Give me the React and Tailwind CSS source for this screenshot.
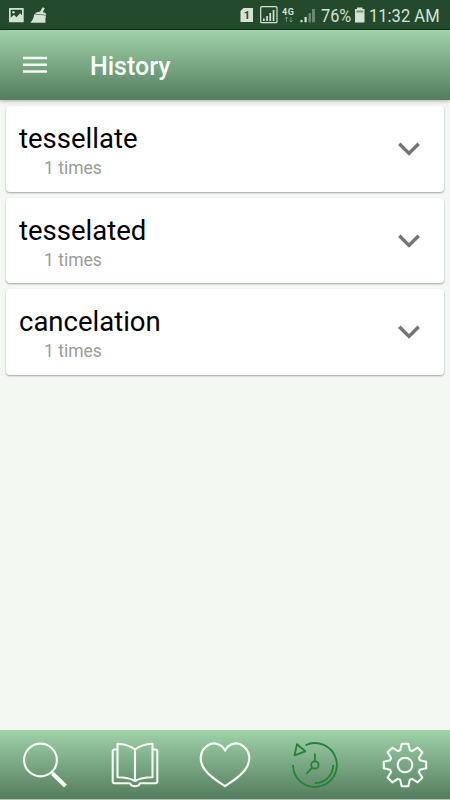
import React from "react";

const entries = [
  { word: "tessellate", count: "1 times" },
  { word: "tesselated", count: "1 times" },
  { word: "cancelation", count: "1 times" },
];

// Outline of an eight-toothed gear centred on (45, 35)
const gearPoints = Array.from({ length: 8 }, (_, i) => {
  const a = (i * Math.PI) / 4;
  return [[-4.8, -14.8], [-3.3, -21.2], [3.3, -21.2], [4.8, -14.8]]
    .map(([x, y]) => `${(45 + x * Math.cos(a) - y * Math.sin(a)).toFixed(2)},${(35 + x * Math.sin(a) + y * Math.cos(a)).toFixed(2)}`)
    .join(" ");
}).join(" ");

function NavIcon({ children, color = "#f3fbf4" }) {
  return (
    <button className="h-full min-w-0 flex-1">
      <svg className="block h-[70px] w-[90px]" viewBox="0 0 90 70" fill="none" stroke={color} strokeWidth="2.1" strokeLinejoin="round">
        {children}
      </svg>
    </button>
  );
}

function StatusBar() {
  return (
    <div className="flex h-[30px] items-center border-b border-[#0b3015] bg-[#234a2d] text-[#d5e2d6]">
      <svg className="block h-[29px] w-[60px]" viewBox="0 0 60 29" fill="currentColor">
        <path fillRule="evenodd" d="M9.5 8h13.700q.5 0 .5.500v13.200q0 .5-.5.500H9.500q-.5 0-.5-.5V8.500q0-.5.500-.5ZM10.700 9.700v8l3.300-3 2.500 2.500 3.500-4 2 2V9.700Z" />
        <circle cx="13.500" cy="12.300" r="1.200" />
        <path d="M42.600 7.300 44.800 8.200 42.800 12Q46 12.500 46.500 15L34.800 13.800Q37 11.500 40 11.800ZM34.200 14.300 46 15.500Q45 19.500 45.500 22.700H30.300Q33.500 20 34.200 14.300Z" />
      </svg>
      <svg className="ml-auto block h-[29px] w-[80px] shrink-0" viewBox="238 0 80 29" fill="currentColor">
        <path d="M243.500 8h9.500v14h-12.500V11Z" />
        <text x="247" y="19" textAnchor="middle" fontFamily="Roboto, sans-serif" fontSize="11" fontWeight="700" fill="#234a2d">1</text>
        <rect x="260.700" y="6.700" width="16.300" height="16" rx="1" fill="none" stroke="currentColor" strokeWidth="1.200" />
        <path d="M263 18.500h1.700v2.500h-1.700ZM266.200 16h1.700v5h-1.700ZM269.400 13h1.700v8h-1.700ZM272.700 10h1.700v11h-1.700Z" />
        <text x="282" y="15" fontFamily="Roboto, sans-serif" fontSize="9" fontWeight="700" letterSpacing=".6">4G</text>
        <path d="M286.500 17v5M284.900 18.700l1.600-1.700 1.600 1.700M291 17v5M289.400 20.300l1.600 1.700 1.600-1.700" stroke="currentColor" fill="none" opacity=".4" />
        <path d="M300.500 20h2v2.300h-2ZM304.500 17h2.200v5.300h-2.200Z" />
        <path d="M308.500 13h2.500v9.300h-2.500ZM312 9h3v13.300h-3Z" opacity=".4" />
      </svg>
      <div className="ml-[3px] w-[33px] pt-[4px]">
        <span className="inline-block origin-left scale-x-[0.88] whitespace-nowrap text-[18.500px] leading-[24px]">76%</span>
      </div>
      <svg className="block h-[29px] w-[12px]" viewBox="354 0 12 29" fill="currentColor">
        <path d="M357 7.500h5.500V9h2v13.500H355V9h2Z" />
        <path d="M356.300 10.500h7v2h-7Z" fill="#789080" />
      </svg>
      <div className="ml-[3px] w-[81px] pt-[4px]">
        <span className="inline-block origin-left scale-x-[0.895] whitespace-nowrap text-[18.500px] leading-[24px]">11:32 AM</span>
      </div>
    </div>
  );
}

export default function App() {
  return (
    <div className="flex h-[800px] w-[450px] flex-col overflow-hidden bg-[#f3f8f3] font-['Roboto',sans-serif]">
      <StatusBar />
      <header className="z-10 flex h-[70px] shrink-0 items-center bg-linear-to-b from-[#a0d3aa] to-[#557d5f] pl-[23px] shadow-[0_1px_4px_rgba(0,0,0,0.3)]">
        <button className="w-6">
          <svg className="block h-[18px] w-6" viewBox="0 0 24 18" fill="#f5fcf6">
            <path d="M0 .7h24v2.500H0ZM0 7.500h24v2.500H0ZM0 14.300h24v2.500H0Z" />
          </svg>
        </button>
        <h1 className="ml-[43px] pt-[3px] text-[25px] font-medium leading-[30px] text-[#fafffa]">History</h1>
      </header>
      <main className="flex flex-1 flex-col gap-[6px] px-[6px] pt-[6px]">
        {entries.map(({ word, count }) => (
          <article key={word} className="flex h-[85.700px] shrink-0 justify-between rounded-[4px] bg-white pl-[13px] pr-[23px] shadow-[0_1px_2px_rgba(0,0,0,0.35)]">
            <div className="pt-[16px]">
              <h2 className="text-[27.500px] leading-[34px] text-black">{word}</h2>
              <p className="pl-[25px] text-[17.500px] leading-[24px] text-[#9b9b9b]">{count}</p>
            </div>
            <svg className="mt-[35px] h-[17px] w-[24px]" viewBox="0 0 24 17" fill="none" stroke="#757575" strokeWidth="3.500">
              <path d="m2.300 2.700 9.700 9.700 9.700-9.700" />
            </svg>
          </article>
        ))}
      </main>
      <nav className="flex h-[70px] shrink-0 border-b border-[#b4c6b7] bg-linear-to-b from-[#a0d3aa] to-[#557d5f]">
        <NavIcon>
          <circle cx="40.500" cy="30" r="16.400" />
          <path d="M51.500 42 53 43.500" />
          <path d="M52.500 43.500 65.500 56" strokeWidth="4" />
        </NavIcon>
        <NavIcon>
          <path d="M45 19.500Q38 14 27.500 13.700V47.200Q38 47 45 51Q52 47 62.500 47.200V13.700Q52 14 45 19.500V51" />
          <path d="M27.500 19.500H24.500Q22.700 19.500 22.700 21.500V51.500Q22.700 53.200 24.500 53.200H40Q41 56.300 45 56.300T50 53.200H65.500Q67.300 53.200 67.300 51.500V21.500Q67.300 19.500 65.500 19.500H62.500" />
        </NavIcon>
        <NavIcon>
          <path strokeWidth="2.200" d="M45 20.500C41 12.800 33 12.300 28.500 15C19 20.500 18.500 32 25.500 40.500C30.500 47 38 51.500 45 56.200C52 51.500 59.500 47 64.500 40.500C71.500 32 71 20.500 61.500 15C57 12.300 49 12.800 45 20.500Z" />
        </NavIcon>
        <NavIcon color="#27803a">
          <g strokeWidth="1.800">
            <path d="M23 35A21.900 21.900 0 1 0 35.500 15.200" />
            <path d="M63.200 35A18.300 18.300 0 0 1 44.900 53.200" />
            <circle cx="44.900" cy="35" r="3.700" />
            <path d="M44.900 23.500V31.300M42.300 37.600 36.300 43.800" />
            <path d="M27 14.200 35.300 21.300 24.500 25.300Z" />
          </g>
        </NavIcon>
        <NavIcon>
          <polygon points={gearPoints} />
          <circle cx="45" cy="35" r="7.300" />
        </NavIcon>
      </nav>
    </div>
  );
}
